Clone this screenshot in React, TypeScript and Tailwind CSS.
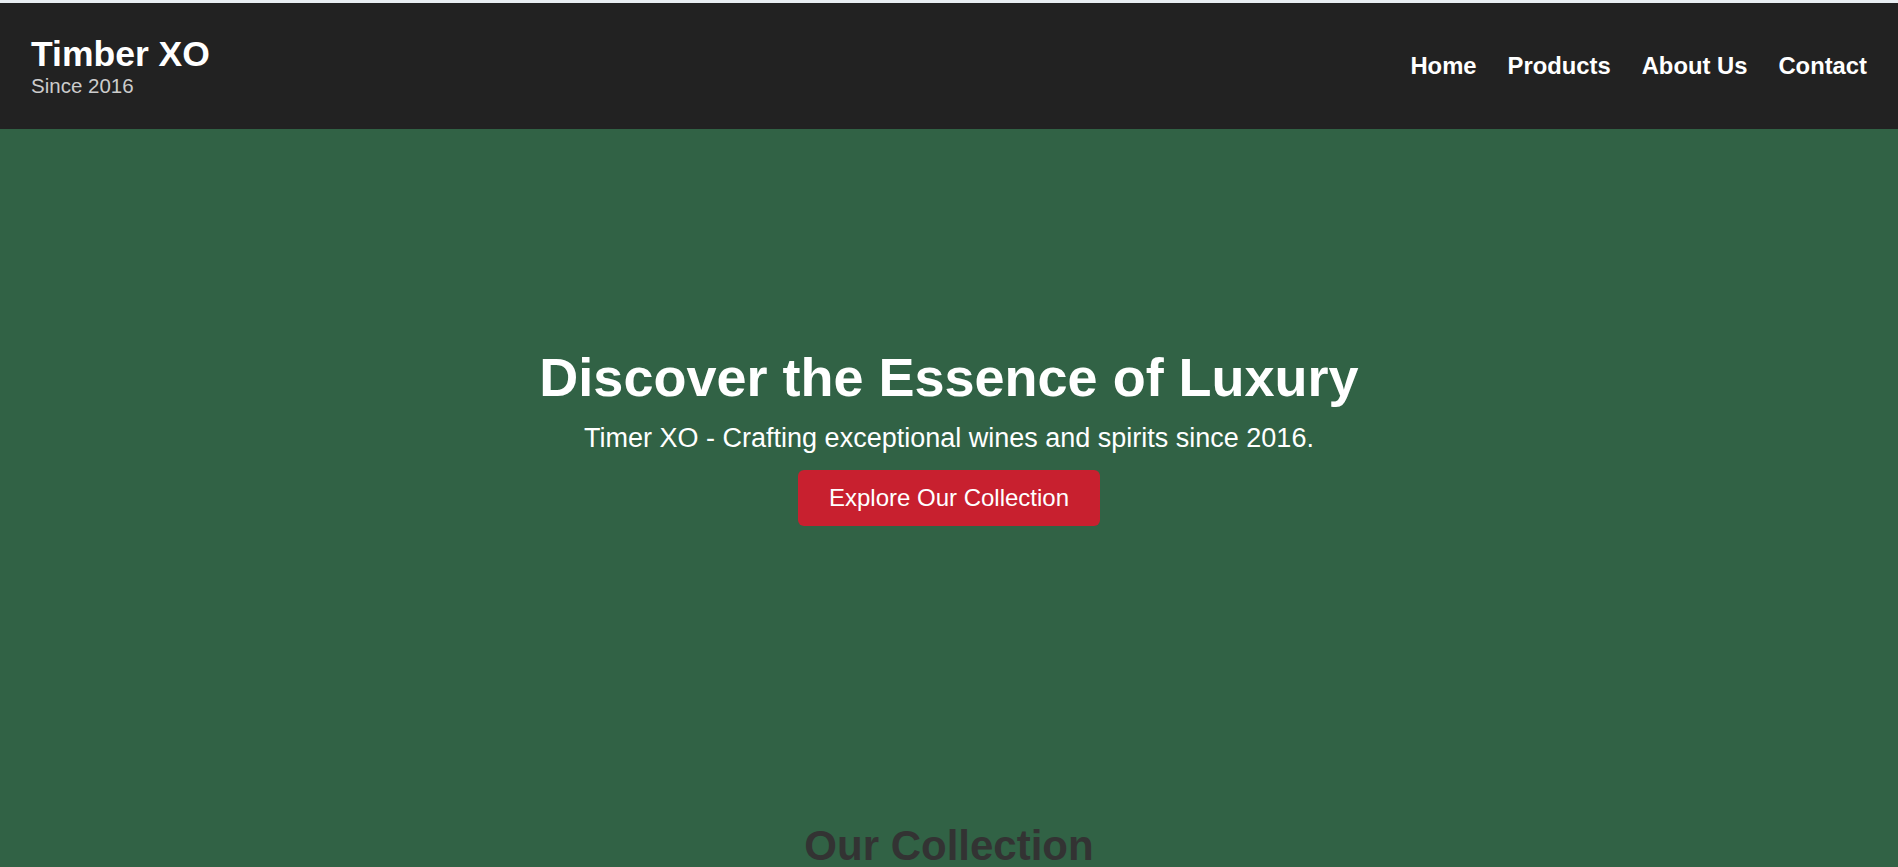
const NAV_LINKS = ["Home", "Products", "About Us", "Contact"];

function Header() {
  return (
    <header className="flex h-[126px] items-center justify-between bg-[#222222] px-[31px]">
      <div className="flex flex-col">
        <span className="text-[35.5px] leading-[40px] font-bold text-white">Timber XO</span>
        <span className="text-[20.5px] leading-[24px] text-[#cccccc]">Since 2016</span>
      </div>
      <nav>
        <ul className="flex items-center gap-[31px]">
          {NAV_LINKS.map((link) => (
            <li key={link}>
              <a href="#" className="text-[23.8px] font-bold text-white">
                {link}
              </a>
            </li>
          ))}
        </ul>
      </nav>
    </header>
  );
}

function Hero() {
  return (
    <section className="flex h-[613px] flex-col items-center justify-center text-center text-white">
      <h1 className="mb-[15px] text-[54px] leading-[62px] font-bold">Discover the Essence of Luxury</h1>
      <p className="mb-[16px] text-[27px] leading-[31px]">
        Timer XO - Crafting exceptional wines and spirits since 2016.
      </p>
      <button
        type="button"
        className="h-[56px] rounded-[6px] bg-[#c8202f] px-[31px] text-[24px] leading-[28px] text-white"
      >
        Explore Our Collection
      </button>
    </section>
  );
}

export default function App() {
  return (
    <div className="min-h-screen bg-[#316245] font-['Liberation_Sans',Arial,sans-serif]">
      <div className="h-[3px] bg-[#e9eef2]" />
      <Header />
      <Hero />
      <section className="pt-[80px] text-center">
        <h2 className="text-[42px] leading-[48px] font-bold text-[#333333]">Our Collection</h2>
      </section>
    </div>
  );
}
